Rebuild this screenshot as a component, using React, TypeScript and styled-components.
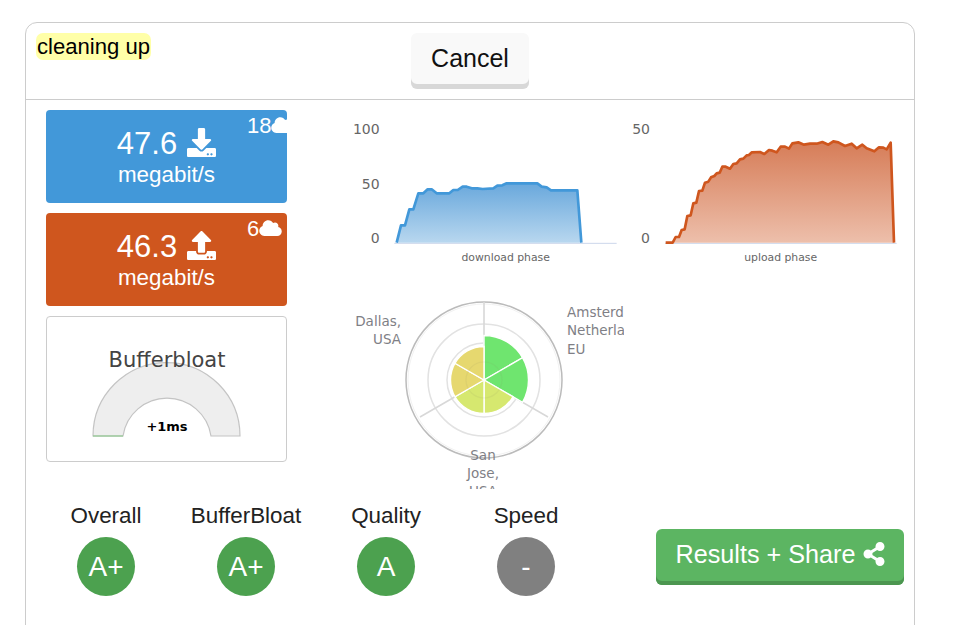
import React from "react"
import styled, { createGlobalStyle } from "styled-components"
import { FaCloud, FaDownload, FaShareAlt, FaUpload } from "react-icons/fa"

const Global = createGlobalStyle`
  html, body {
    margin: 0;
    padding: 0;
    background: #fff;
    overflow: hidden;
  }
  body {
    font-family: "Liberation Sans", Arial, sans-serif;
  }
`

const Page = styled.div`
  height: 625px;
  overflow: hidden;
  padding: 22px 0 0 25px;
  box-sizing: border-box;
`

const Card = styled.div`
  width: 890px;
  height: 680px;
  box-sizing: border-box;
  border: 1px solid #ccc;
  border-radius: 12px;
`

const Header = styled.div`
  display: grid;
  grid-template-columns: 1fr auto 1fr;
  align-items: start;
  height: 76px;
  border-bottom: 1px solid #ccc;
`

const Status = styled.span`
  justify-self: start;
  margin: 10px 0 0 10px;
  padding: 0 1px;
  height: 27px;
  line-height: 27px;
  font-size: 22.1px;
  color: #000;
  background: #ffffa8;
  border-radius: 7px;
`

const CancelButton = styled.button`
  width: 118px;
  height: 56px;
  margin-top: 10px;
  padding: 0 0 5px;
  border: 0;
  border-radius: 6px;
  background: #f9f9f9;
  box-shadow: inset 0 -5px 0 #d8d8d8;
  font-family: inherit;
  font-size: 25px;
  color: #111;
`

const Main = styled.div`
  display: flex;
  padding: 10px 20px 0;
`

const LeftColumn = styled.div`
  display: flex;
  flex-direction: column;
  gap: 10px;
  width: 241px;
`

const SpeedPanel = styled.div<{ $color: string }>`
  position: relative;
  height: 93px;
  overflow: hidden;
  border-radius: 4px;
  background: ${(p) => p.$color};
  color: #fff;
  text-align: center;
  box-sizing: border-box;
  padding-top: 17px;
`

const SpeedValue = styled.div`
  display: flex;
  justify-content: center;
  align-items: center;
  gap: 10px;
  height: 34px;
  font-size: 31px;
  svg {
    width: 29px;
    height: 29px;
    margin-top: -4px;
  }
`

const SpeedUnit = styled.div`
  font-size: 22.4px;
  line-height: 27px;
`

const ServerBadge = styled.div`
  position: absolute;
  top: 3px;
  left: 201px;
  display: flex;
  align-items: center;
  height: 26px;
  font-size: 22px;
  white-space: nowrap;
  svg {
    width: 23px;
    height: 18px;
    flex-shrink: 0;
    margin-top: -3px;
  }
`

const BloatPanel = styled.div`
  height: 146px;
  box-sizing: border-box;
  border: 1px solid #ccc;
  border-radius: 4px;
  svg {
    display: block;
  }
`

const RightColumn = styled.div`
  display: flex;
  flex-direction: column;
  gap: 25px;
  margin-left: 53px;
`

const ChartRow = styled.div`
  display: flex;
  height: 160px;
`

const ChartSvg = styled.svg`
  display: block;
  flex-shrink: 0;
  text {
    font-family: "DejaVu Sans", sans-serif;
  }
`

const RadarSvg = styled.svg`
  display: block;
  text {
    font-family: "DejaVu Sans", sans-serif;
    font-size: 13.5px;
    fill: #7f7f86;
  }
`

const Footer = styled.div`
  display: flex;
  margin-top: 12px;
  padding-left: 10px;
`

const Grade = styled.div`
  display: flex;
  flex-direction: column;
  align-items: center;
  gap: 6px;
  width: 140px;
`

const GradeLabel = styled.div`
  font-size: 22.4px;
  line-height: 30px;
  color: #222;
`

const GradeCircle = styled.div<{ $color: string }>`
  display: flex;
  align-items: center;
  justify-content: center;
  width: 58px;
  height: 59px;
  border-radius: 50%;
  background: ${(p) => p.$color};
  color: #fff;
  font-size: 28px;
`

const ShareButton = styled.button`
  display: flex;
  align-items: center;
  justify-content: center;
  gap: 7px;
  width: 248px;
  height: 56px;
  margin: 28px 0 0 60px;
  padding: 0 0 6px 2px;
  border: 0;
  border-radius: 6px;
  background: #5cb562;
  box-shadow: inset 0 -4px 0 #4c9650;
  color: #fff;
  font-family: inherit;
  font-size: 25.2px;
  svg {
    width: 24px;
    height: 24px;
  }
`

const downloadPoints =
  "170,398 183,346 195,346 208,298 220,298 235,250 250,250 263,238 275,238 290,250 328,250 340,240 353,240 368,230 380,230 395,235 412,235 428,237 460,235 472,227 487,226 500,220 592,220 605,230 620,232 633,241 712,241 724,398"

const uploadPoints =
  "122,398 143,398 152,381 162,381 170,360 179,358 187,318 197,316 205,280 214,278 222,243 232,242 240,218 250,215 258,202 268,198 275,190 284,188 292,170 302,170 315,176 325,162 335,160 345,148 355,146 365,136 372,135 380,127 405,126 418,132 432,120 442,122 455,127 467,110 480,110 492,116 502,100 520,97 537,104 555,101 575,101 592,96 610,104 625,94 640,97 660,108 680,101 695,115 712,104 725,115 748,124 762,112 775,113 785,118 797,98 807,398"

interface IPhaseChart {
  id: string
  width: number
  points: string
  line: string
  top: string
  bottom: string
  axisFrom: number
  axisTo: number
  labelX: number
  labels: { text: string; y: number }[]
  title: string
  titleX: number
}

// coordinates are in 3x units, read off the enlarged reference
const PhaseChart = ({ id, width, points, line, top, bottom, axisFrom, axisTo, labelX, labels, title, titleX }: IPhaseChart) => (
  <ChartSvg width={width} height={160} viewBox={`0 0 ${width * 3} 480`}>
    <defs>
      <linearGradient id={id} x1="0" y1="0" x2="0" y2="1">
        <stop offset="0%" stopColor={top} />
        <stop offset="100%" stopColor={bottom} />
      </linearGradient>
    </defs>
    {labels.map((l) => (
      <text key={l.text} x={labelX} y={l.y} textAnchor="end" fontSize="42" fill="#666">
        {l.text}
      </text>
    ))}
    <line x1={axisFrom} x2={axisTo} y1="400" y2="400" stroke="#ccd6eb" strokeWidth="3" />
    <polygon points={points} fill={`url(#${id})`} />
    <polyline points={points} fill="none" stroke={line} strokeWidth="8" strokeLinejoin="round" />
    <text x={titleX} y="452" textAnchor="middle" fontSize="32.500" fill="#666">
      {title}
    </text>
  </ChartSvg>
)

const wedge = (from: number, to: number, r: number) => {
  const cx = 144
  const cy = 85
  const rad = (a: number) => ((a - 90) * Math.PI) / 180
  const x1 = cx + r * Math.cos(rad(from))
  const y1 = cy + r * Math.sin(rad(from))
  const x2 = cx + r * Math.cos(rad(to))
  const y2 = cy + r * Math.sin(rad(to))
  return `M${cx} ${cy}L${x1} ${y1}A${r} ${r} 0 0 1 ${x2} ${y2}Z`
}

const Radar = () => (
  <RadarSvg width={284} height={194} viewBox="0 0 284 194">
    <circle cx="144" cy="85" r="78" fill="#fff" stroke="#bbb" strokeWidth="1.5" />
    <circle cx="144" cy="85" r="76" fill="none" stroke="#f2f2f2" strokeWidth="1" />
    <circle cx="144" cy="85" r="56" fill="none" stroke="#e2e2e2" strokeWidth="1.5" />
    <circle cx="144" cy="85" r="37" fill="none" stroke="#e2e2e2" strokeWidth="1.5" />
    <path d="M144 85V7M144 85L208 122M144 85L80 122" stroke="#d8d8d8" strokeWidth="1.6" />
    <path d={wedge(0, 60, 44.5)} fill="#6fe56f" stroke="#fff" strokeWidth="1.4" />
    <path d={wedge(60, 120, 44.5)} fill="#6fe56f" stroke="#fff" strokeWidth="1.4" />
    <path d={wedge(120, 180, 33.5)} fill="#d6e86f" stroke="#fff" strokeWidth="1.4" />
    <path d={wedge(180, 240, 33.5)} fill="#d6e86f" stroke="#fff" strokeWidth="1.4" />
    <path d={wedge(240, 300, 33.5)} fill="#e6d86f" stroke="#fff" strokeWidth="1.4" />
    <path d={wedge(300, 360, 33.5)} fill="#e6d86f" stroke="#fff" strokeWidth="1.4" />
    <circle cx="144" cy="85" r="18" fill="none" stroke="#8a8a60" strokeOpacity="0.1" strokeWidth="1.2" />
    <text x="227" y="22">Amsterd</text>
    <text x="227" y="40">Netherla</text>
    <text x="227" y="59">EU</text>
    <text x="61" y="31" textAnchor="end">Dallas,</text>
    <text x="61" y="49" textAnchor="end">USA</text>
    <text x="143" y="165" textAnchor="middle">San</text>
    <text x="143" y="183" textAnchor="middle">Jose,</text>
    <text x="143" y="201" textAnchor="middle">USA</text>
  </RadarSvg>
)

const Bloat = () => (
  <svg width={239} height={144} viewBox="0 0 239 144">
    <path
      d="M46 119A73.500 73.500 0 0 1 193 119H164A44.500 44.500 0 0 0 76 119Z"
      fill="#eee"
      stroke="#c4c4c4"
      strokeWidth="1.2"
    />
    <line x1="46" x2="76" y1="119" y2="119" stroke="#90c890" strokeWidth="1.2" />
    <text x="120" y="50" textAnchor="middle" fontFamily="'DejaVu Sans', sans-serif" fontSize="21" fill="#444">
      Bufferbloat
    </text>
    <text x="120" y="114" textAnchor="middle" fontFamily="'DejaVu Sans', sans-serif" fontSize="13" fontWeight="bold" fill="#000">
      +1ms
    </text>
  </svg>
)

const grades = [
  { label: "Overall", value: "A+", color: "#4ca14f" },
  { label: "BufferBloat", value: "A+", color: "#4ca14f" },
  { label: "Quality", value: "A", color: "#4ca14f" },
  { label: "Speed", value: "-", color: "#808080" },
]

const App = () => (
  <>
    <Global />
    <Page>
      <Card>
        <Header>
          <Status>cleaning up</Status>
          <CancelButton>Cancel</CancelButton>
        </Header>
        <Main>
          <LeftColumn>
            <SpeedPanel $color="#4298d9">
              <SpeedValue>
                47.6 <FaDownload />
              </SpeedValue>
              <SpeedUnit>megabit/s</SpeedUnit>
              <ServerBadge>
                18
                <FaCloud />
              </ServerBadge>
            </SpeedPanel>
            <SpeedPanel $color="#cf561e">
              <SpeedValue>
                46.3 <FaUpload />
              </SpeedValue>
              <SpeedUnit>megabit/s</SpeedUnit>
              <ServerBadge>
                6
                <FaCloud />
              </ServerBadge>
            </SpeedPanel>
            <BloatPanel>
              <Bloat />
            </BloatPanel>
          </LeftColumn>
          <RightColumn>
            <ChartRow>
              <PhaseChart
                id="downloadFill"
                width={285}
                points={downloadPoints}
                line="#4298d9"
                top="#69a8dc"
                bottom="#b8d7ef"
                axisFrom={163}
                axisTo={830}
                labelX={119}
                labels={[
                  { text: "100", y: 72 },
                  { text: "50", y: 236 },
                  { text: "0", y: 398 },
                ]}
                title="download phase"
                titleX={497}
              />
              <PhaseChart
                id="uploadFill"
                width={280}
                points={uploadPoints}
                line="#cf561e"
                top="#d67c57"
                bottom="#edbfab"
                axisFrom={120}
                axisTo={815}
                labelX={75}
                labels={[
                  { text: "50", y: 72 },
                  { text: "0", y: 398 },
                ]}
                title="upload phase"
                titleX={467}
              />
            </ChartRow>
            <Radar />
          </RightColumn>
        </Main>
        <Footer>
          {grades.map((g) => (
            <Grade key={g.label}>
              <GradeLabel>{g.label}</GradeLabel>
              <GradeCircle $color={g.color}>{g.value}</GradeCircle>
            </Grade>
          ))}
          <ShareButton>
            Results + Share <FaShareAlt />
          </ShareButton>
        </Footer>
      </Card>
    </Page>
  </>
)

export default App
